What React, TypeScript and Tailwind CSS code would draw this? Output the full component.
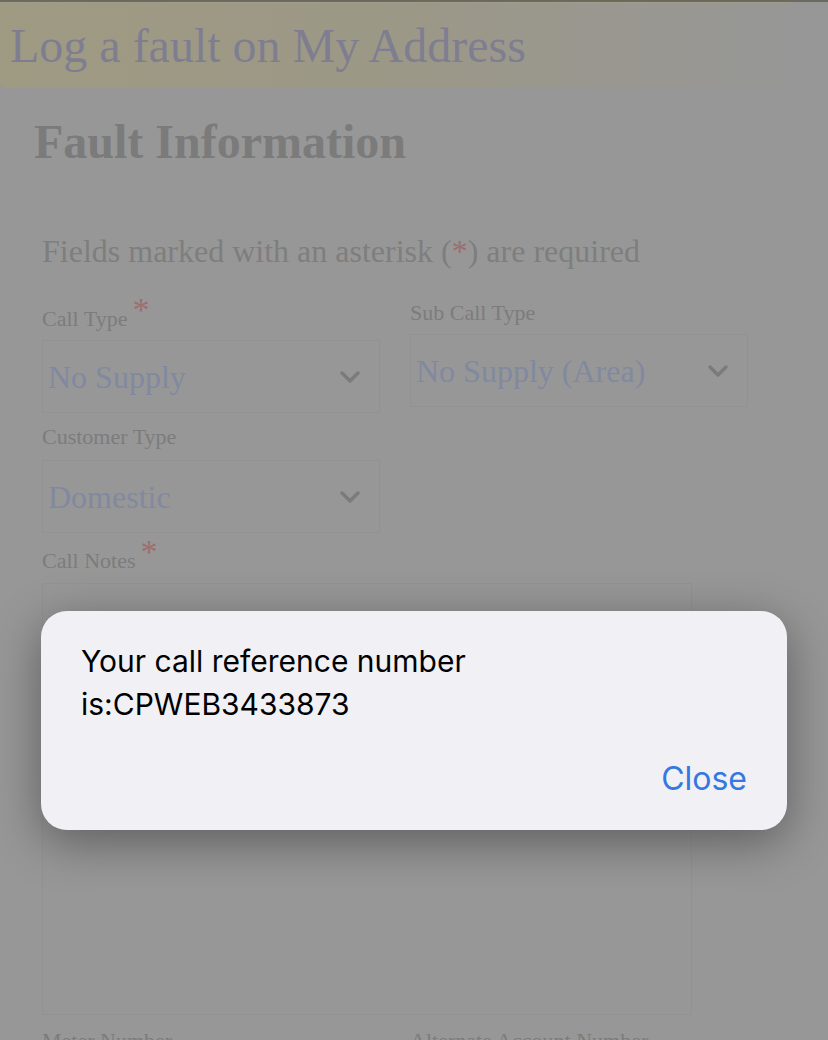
import React from "react"

const serif = "font-['Liberation_Serif',serif]"

function Chevron() {
  return (
    <svg width="22" height="14" viewBox="0 0 22 14" className="shrink-0">
      <polyline points="3,3 11,11 19,3" fill="none" stroke="#7b7b7b" strokeWidth="3.5" strokeLinecap="round" strokeLinejoin="round" />
    </svg>
  )
}

function Req() {
  return <span className="text-[#9d6e6e] text-[34px] leading-none relative -top-[4px] ml-[5px]">*</span>
}

function SelectBox({ value, className = "" }: { value: string; className?: string }) {
  return (
    <div className={`flex items-center justify-between w-[338px] h-[73px] border border-[#929292] pl-[5px] pr-[18px] ${className}`}>
      <span className={`${serif} text-[32px] leading-[36px] text-[#8189a0]`}>{value}</span>
      <Chevron />
    </div>
  )
}

const label = "text-[22px] leading-[24px] text-[#7c7c7c] h-[24px] flex items-end"

export default function App() {
  return (
    <div className={`relative w-[828px] h-[1040px] overflow-hidden bg-[#979797] ${serif}`}>
      <div className="h-[2px] bg-[#6c6a5f]" />
      <div className="h-[86px] w-[790px] rounded-b-[6px] bg-gradient-to-r from-[#9f9a82] via-[#9c9887] to-[#979797] border-t border-[#a19d8b]">
        <h1 className="pl-[10px] pt-[18px] text-[48px] leading-[50px] text-[#7f7e91]">Log a fault on My Address</h1>
      </div>

      <div className="px-[34px] pt-[26px]">
        <h2 className="text-[48px] leading-[56px] font-bold text-[#7b7b7b]">Fault Information</h2>
        <div className="pl-[8px]">
          <p className="mt-[63px] text-[32px] leading-[36px] text-[#7e7e7e]">
            Fields marked with an asterisk (<span className="text-[#9d6e6e]">*</span>) are required
          </p>

          <div className="flex gap-[30px] items-start">
            <div className="mt-[38px]">
              <div className={label}>
                Call Type<Req />
              </div>
              <SelectBox value="No Supply" className="mt-[9px]" />

              <div className={`${label} mt-[12px]`}>Customer Type</div>
              <SelectBox value="Domestic" className="mt-[11px]" />
            </div>
            <div className="mt-[32px]">
              <div className={label}>Sub Call Type</div>
              <SelectBox value="No Supply (Area)" className="mt-[9px]" />
            </div>
          </div>

          <div className={`${label} mt-[16px]`}>
            Call Notes<Req />
          </div>
          <div className="mt-[10px] w-[650px] h-[432px] border border-[#929292]" />

          <div className="mt-[14px] flex text-[22px] leading-[24px] text-[#7c7c7c]">
            <span className="w-[368px]">Meter Number</span>
            <span>Alternate Account Number</span>
          </div>
        </div>
      </div>

      {/* alert dialog */}
      <div className="absolute left-[41px] top-[611px] w-[746px] h-[219px] rounded-[26px] bg-[#f1f0f5] shadow-[0_12px_48px_rgba(0,0,0,0.38)] font-['Inter',sans-serif]">
        <p className="pl-[40px] pt-[29px] text-[30px] leading-[43px] text-black">
          Your call reference number
          <br />
          is:CPWEB3433873
        </p>
        <div className="flex justify-end pr-[40px] mt-[35px]">
          <button className="text-[32px] leading-[36px] text-[#3478e0]">Close</button>
        </div>
      </div>
    </div>
  )
}
